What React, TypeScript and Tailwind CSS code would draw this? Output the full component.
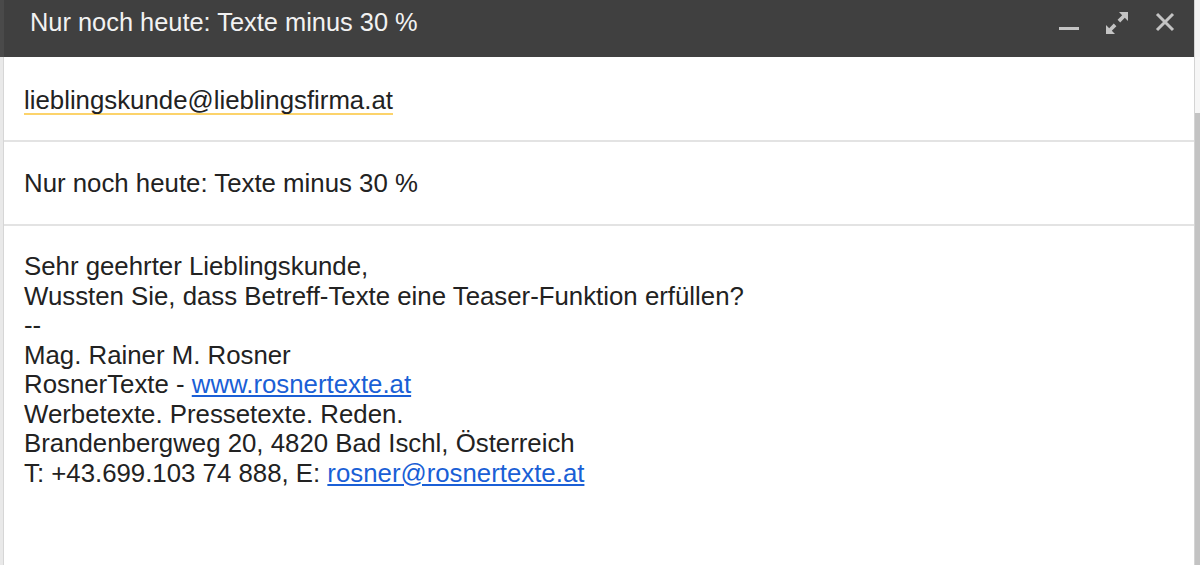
import React from "react";

const font = { fontFamily: '"Liberation Sans", Arial, sans-serif' };

function HeaderIcons() {
  return (
    <div className="ml-auto flex items-start pt-[12px] text-[#c4c4c4]">
      {/* minimize */}
      <svg width="22" height="22" viewBox="0 0 22 22" className="mr-[26px]">
        <rect x="1" y="15" width="20" height="3" fill="currentColor" />
      </svg>
      {/* pop-out / expand */}
      <svg width="22" height="22" viewBox="0 0 22 22" className="mr-[27px]">
        <path d="M13 0h9v9l-3.2-3.2-4.6 4.6-2.6-2.6 4.6-4.6z" fill="currentColor" />
        <path d="M0 22v-9l3.2 3.2 4.6-4.6 2.6 2.6-4.6 4.6L9 22z" fill="currentColor" />
      </svg>
      {/* close */}
      <svg width="20" height="20" viewBox="0 0 20 20" className="mr-[19px]">
        <path d="M2 2l16 16M18 2L2 18" stroke="currentColor" strokeWidth="3" />
      </svg>
    </div>
  );
}

export default function App() {
  return (
    <div className="flex h-[565px] w-[1200px] overflow-hidden bg-white text-[#222]" style={font}>
      {/* left edge */}
      <div className="flex w-[4px] flex-col">
        <div className="h-[57px] bg-[#4a4a4a]" />
        <div className="flex-1 border-r border-[#d6d6d6] bg-[#e9e9e9]" />
      </div>

      {/* compose window */}
      <div className="flex flex-1 flex-col">
        <div className="flex h-[57px] items-start bg-[#404040] pl-[26px]">
          <span className="pt-[8px] text-[25.4px] leading-[28px] text-[#f2f2f2]">
            Nur noch heute: Texte minus 30 %
          </span>
          <HeaderIcons />
        </div>

        <div className="flex h-[85px] items-center border-b-2 border-[#e3e3e3] pl-[20px] pt-[4px]">
          <span className="border-b-2 border-[#fcd36b] text-[25.8px] leading-[26px]">
            lieblingskunde@lieblingsfirma.at
          </span>
        </div>

        <div className="flex h-[84px] items-center border-b-2 border-[#e3e3e3] pl-[20px]">
          <span className="text-[25.8px] leading-[28px]">Nur noch heute: Texte minus 30 %</span>
        </div>

        <div className="flex-1 pl-[20px] pt-[26px] text-[25.8px] leading-[29.5px]">
          <p>Sehr geehrter Lieblingskunde,</p>
          <p>Wussten Sie, dass Betreff-Texte eine Teaser-Funktion erfüllen?</p>
          <p>--</p>
          <p>Mag. Rainer M. Rosner</p>
          <p>
            RosnerTexte -{" "}
            <a href="#" className="text-[#1a5fd6] underline">
              www.rosnertexte.at
            </a>
          </p>
          <p>Werbetexte. Pressetexte. Reden.</p>
          <p>Brandenbergweg 20, 4820 Bad Ischl, Österreich</p>
          <p>
            T: +43.699.103 74 888, E:{" "}
            <a href="#" className="text-[#1a5fd6] underline">
              rosner@rosnertexte.at
            </a>
          </p>
        </div>
      </div>

      {/* scrollbar */}
      <div className="flex w-[6px] flex-col border-l border-[#d4d4d4]">
        <div className="h-[57px] bg-[#f3f3f3]" />
        <div className="h-[56px] bg-[#f6f6f6]" />
        <div className="flex-1 bg-[#c3c3c3]" />
      </div>
    </div>
  );
}
